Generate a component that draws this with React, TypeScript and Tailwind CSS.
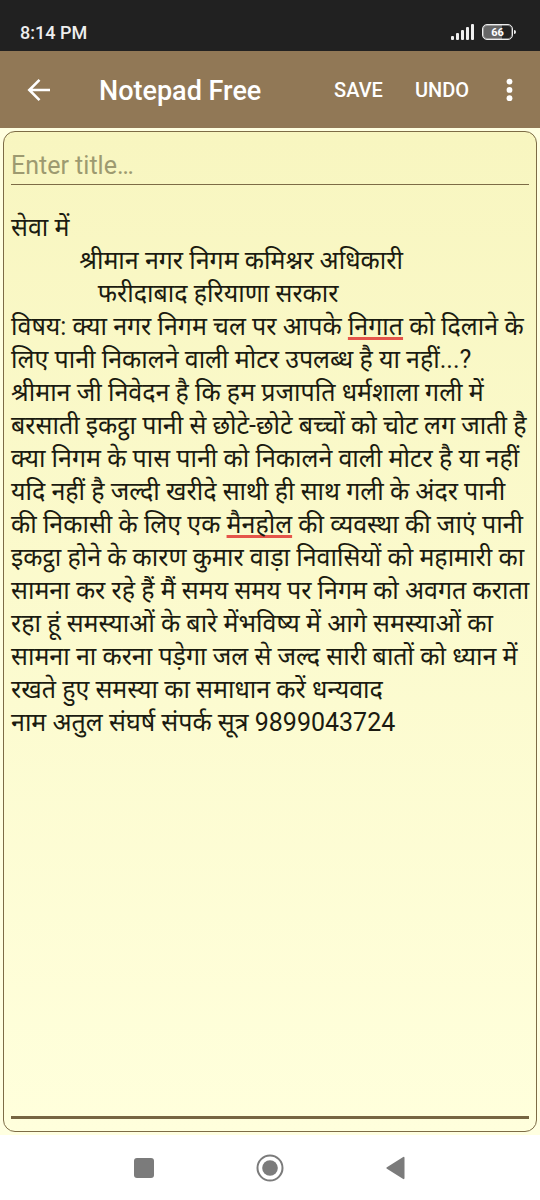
import { useState } from "react";

const NOTE_LINES = [
  { text: "सेवा में" },
  { text: "           श्रीमान नगर निगम कमिश्नर अधिकारी" },
  { text: "              फरीदाबाद हरियाणा सरकार" },
  {
    text: "विषय: क्या नगर निगम चल पर आपके निगात को दिलाने के लिए पानी निकालने वाली मोटर उपलब्ध है या नहीं...?",
    misspelled: "निगात",
  },
  {
    text: "श्रीमान जी निवेदन है कि हम प्रजापति धर्मशाला गली में बरसाती इकट्ठा पानी से छोटे-छोटे बच्चों को चोट लग जाती है क्या निगम के पास पानी को निकालने वाली मोटर है या नहीं यदि नहीं है जल्दी खरीदे साथी ही साथ गली के अंदर पानी की निकासी के लिए एक मैनहोल की व्यवस्था की जाएं पानी इकट्ठा होने के कारण कुमार वाड़ा निवासियों को महामारी का सामना कर रहे हैं मैं समय समय पर निगम को अवगत कराता रहा हूं समस्याओं के बारे मेंभविष्य में आगे समस्याओं का सामना ना करना पड़ेगा जल से जल्द सारी बातों को ध्यान में रखते हुए समस्या का समाधान करें धन्यवाद",
    misspelled: "मैनहोल",
  },
  { text: "नाम अतुल संघर्ष संपर्क सूत्र 9899043724" },
];

function StatusBar() {
  return (
    <div className="flex h-[51px] items-end justify-between bg-[#212121] pr-6 pb-2 pl-5 text-white">
      <span className="text-lg leading-5 font-medium text-[#eeeeee]">8:14 PM</span>
      <div className="flex items-center gap-[7px] pb-[3px]">
        <svg width="24" height="16" viewBox="0 0 24 16" fill="#eeeeee" aria-hidden="true">
          <rect x="0" y="12" width="3" height="4" rx="1" />
          <rect x="5" y="9" width="3" height="7" rx="1" />
          <rect x="10" y="6" width="3" height="10" rx="1" />
          <rect x="15" y="3" width="3" height="13" rx="1" />
          <rect x="20" y="0" width="3" height="16" rx="1" />
        </svg>
        <div className="flex items-center gap-px">
          <div className="flex h-4 w-[31px] items-center justify-center rounded-[5px] border border-[#eeeeee] bg-linear-to-r from-[#666666] from-65% to-[#212121] to-65% pt-0.5 text-[11px] leading-3 font-bold ring-1 ring-[#eeeeee]/40 ring-inset">
            66
          </div>
          <div className="h-1 w-0.5 rounded-r bg-[#eeeeee]" />
        </div>
      </div>
    </div>
  );
}

function AppBar() {
  return (
    <header className="flex h-[77px] items-center bg-[#917856] pr-[17px] pl-6 text-white">
      <button type="button" aria-label="Back" className="mr-12 shrink-0">
        <svg width="27" height="28" viewBox="0 0 27 28" fill="none" stroke="white" strokeWidth="2.6">
          <path d="M26 14H5.500M15.500 3.800L5.300 14l10.200 10.200" />
        </svg>
      </button>
      <h1 className="flex-1 truncate pt-0.5 text-[27px] leading-8 font-medium">Notepad Free</h1>
      <button type="button" className="mr-8 text-xl font-medium">
        SAVE
      </button>
      <button type="button" className="mr-[27px] text-xl font-medium">
        UNDO
      </button>
      <button type="button" aria-label="More options">
        <svg width="27" height="28" viewBox="0 0 27 28" fill="white">
          <circle cx="13.500" cy="5.600" r="2.900" />
          <circle cx="13.500" cy="13.900" r="2.900" />
          <circle cx="13.500" cy="22.200" r="2.900" />
        </svg>
      </button>
    </header>
  );
}

function NoteLine({ text, misspelled }: { text: string; misspelled?: string }) {
  if (!misspelled) return <p>{text}</p>;

  const [before, after] = text.split(misspelled);
  return (
    <p>
      {before}
      <span className="underline decoration-[#e5554a] decoration-3 underline-offset-2 [text-decoration-skip-ink:none]">
        {misspelled}
      </span>
      {after}
    </p>
  );
}

function NavBar() {
  return (
    <nav className="flex h-[65px] items-center justify-between bg-white px-[130px]">
      <button type="button" aria-label="Recent apps">
        <svg width="28" height="28" viewBox="0 0 28 28" fill="#7b7b7b">
          <rect x="4" y="4" width="20" height="20" rx="3" />
        </svg>
      </button>
      <button type="button" aria-label="Home">
        <svg width="28" height="28" viewBox="0 0 28 28" fill="#7b7b7b">
          <circle cx="14" cy="14" r="12.500" fill="none" stroke="#7b7b7b" strokeWidth="2" />
          <circle cx="14" cy="14" r="7.800" />
        </svg>
      </button>
      <button type="button" aria-label="Back">
        <svg width="28" height="28" viewBox="0 0 28 28" fill="#7b7b7b">
          <path d="M4.900 13.200L20.800 3.200Q22.500 2.200 22.500 4v20q0 1.800-1.700.8L4.900 14.800q-1.400-.8 0-1.600z" />
        </svg>
      </button>
    </nav>
  );
}

export default function App() {
  const [title, setTitle] = useState("");

  return (
    <div className="flex min-h-screen flex-col bg-[#ffffe0] font-['Roboto','Noto_Sans',sans-serif]">
      <StatusBar />
      <AppBar />
      <main className="flex flex-1 flex-col p-[3px]">
        <div className="flex flex-1 flex-col rounded-xl border border-[#7d6c46] bg-linear-to-b from-[#f8f6c0] to-[#ffffdc] px-[7px] pb-3">
          <input
            type="text"
            aria-label="Title"
            placeholder="Enter title…"
            value={title}
            onChange={(e) => setTitle(e.target.value)}
            className="mt-4 h-[37px] w-full border-b border-[#7d6c46] bg-transparent text-[25px] text-[#1b1b10] outline-none placeholder:text-[#9d9a70]"
          />
          <div
            role="textbox"
            aria-label="Note"
            aria-multiline="true"
            contentEditable
            suppressContentEditableWarning
            spellCheck={false}
            className="flex-1 border-b-3 border-[#766542] pt-[26px] text-[25px] leading-[33px] whitespace-pre-wrap text-[#1b1b10] outline-none"
          >
            {/* long lines may run slightly into the card padding */}
            <div className="-mr-1">
              {NOTE_LINES.map((line) => (
                <NoteLine key={line.text} {...line} />
              ))}
            </div>
          </div>
        </div>
      </main>
      <NavBar />
    </div>
  );
}
